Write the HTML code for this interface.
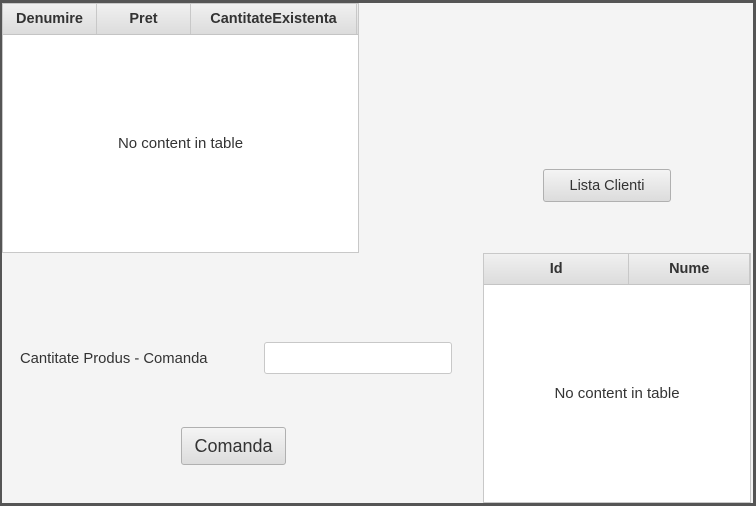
<!DOCTYPE html>
<html><head><style>
body{margin:0;width:756px;height:506px;background:#555;position:relative;overflow:hidden;font-family:"Liberation Sans",sans-serif;color:#333}
.win{position:absolute;left:2px;top:3px;width:751px;height:500px;background:#f4f4f4}
.tbl{position:absolute;background:#fff;border:1px solid #c8c8c8;box-sizing:border-box}
.hdr{position:absolute;left:0;right:0;top:0;height:30px;display:flex;background:linear-gradient(#f0f0f0,#dcdcdc);border-bottom:1px solid #c4c4c4}
.hdr div{border-right:1px solid #c8c8c8;text-align:center;font-weight:bold;font-size:14.5px;line-height:31px;box-sizing:border-box}
.empty{position:absolute;left:0;right:0;text-align:center;font-size:15px}
.btn{position:absolute;border:1px solid #b0b0b0;border-radius:3px;background:linear-gradient(#f4f4f4,#dcdcdc);box-sizing:border-box;text-align:center}
</style></head><body>
<div class="win">
 <div class="tbl" style="left:0;top:0;width:357px;height:250px">
  <div class="hdr"><div style="width:94px">Denumire</div><div style="width:94px">Pret</div><div style="width:166px">CantitateExistenta</div></div>
  <div class="empty" style="top:131px">No content in table</div>
 </div>
 <div class="btn" style="left:541px;top:166px;width:128px;height:33px;font-size:14.5px;line-height:32px">Lista Clienti</div>
 <div class="tbl" style="left:481px;top:250px;width:268px;height:250px">
  <div class="hdr"><div style="width:146px">Id</div><div style="width:121px">Nume</div></div>
  <div class="empty" style="top:131px">No content in table</div>
 </div>
 <div style="position:absolute;left:18px;top:348px;font-size:14.8px">Cantitate Produs - Comanda</div>
 <div style="position:absolute;left:262px;top:339px;width:188px;height:32px;background:#fff;border:1px solid #c8c8c8;border-radius:3px;box-sizing:border-box"></div>
 <div class="btn" style="left:179px;top:424px;width:105px;height:38px;font-size:18px;line-height:37px">Comanda</div>
</div>
</body></html>
